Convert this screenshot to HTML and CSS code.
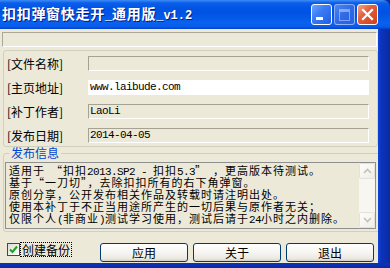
FILE: index.html
```html
<!DOCTYPE html>
<html lang="zh-CN">
<head>
<meta charset="utf-8">
<title>扣扣弹窗快走开_通用版_v1.2</title>
<link rel="stylesheet" href="styles.css">
</head>
<body>
<div class="win">
  <div class="titlebar">
    <span class="title">扣扣弹窗快走开<span class="ta">_</span>通用版<span class="ta">_v1.2</span></span>
    <div class="tbtns">
      <div class="tb tb-min"><span class="minbar"></span></div>
      <div class="tb tb-max"><span class="maxbox"></span></div>
      <div class="tb tb-close">
        <svg width="13" height="13" viewBox="0 0 13 13"><path d="M2 2 L11 11 M11 2 L2 11" stroke="#fff" stroke-width="2.2" stroke-linecap="square"/></svg>
      </div>
    </div>
  </div>
  <div class="frame">
    <div class="client">
      <div class="status"></div>
      <div class="grp1">
        <div class="row"><span class="lbl">[文件名称]</span><span class="fld"></span></div>
        <div class="row"><span class="lbl">[主页地址]</span><span class="fld fld-white">www.laibude.com</span></div>
        <div class="row"><span class="lbl">[补丁作者]</span><span class="fld">LaoLi</span></div>
        <div class="row"><span class="lbl">[发布日期]</span><span class="fld">2014-04-05</span></div>
      </div>
      <fieldset class="grp2">
        <legend class="legend">发布信息</legend>
        <div class="memo">
          <div class="memo-text">
            <div class="ln">适用于<span class="a"> </span>“扣扣<span class="a">2013.SP2 - </span>扣扣<span class="a">5.3</span>”<span class="a"> </span>，更高版本待测试。</div>
            <div class="ln">基于“一刀切”，去除扣扣所有的右下角弹窗。</div>
            <div class="ln">原创分享，公开发布相关作品及转载时请注明出处。</div>
            <div class="ln">使用本补丁于不正当用途所产生的一切后果与原作者无关；</div>
            <div class="ln">仅限个人<span class="a">(</span>非商业<span class="a">)</span>测试学习使用，测试后请于<span class="a">24</span>小时之内删除。</div>
          </div>
          <div class="sbar">
            <div class="sbtn"><svg width="9" height="6" viewBox="0 0 9 6"><path d="M1 5 L4.5 1.5 L8 5" fill="none" stroke="#c4c2b5" stroke-width="1.6"/></svg></div>
            <div class="strack"></div>
            <div class="sbtn"><svg width="9" height="6" viewBox="0 0 9 6"><path d="M1 1 L4.5 4.5 L8 1" fill="none" stroke="#c4c2b5" stroke-width="1.6"/></svg></div>
          </div>
        </div>
      </fieldset>
      <div class="bottom">
        <label class="chk">
          <span class="box"><svg width="9" height="9" viewBox="0 0 9 9"><path d="M1 4.5 L3.5 7 L8 1.5" fill="none" stroke="#21a121" stroke-width="2"/></svg></span>
          <span class="chk-lbl">创建备份</span>
        </label>
        <div class="btns">
          <button class="btn">应用</button>
          <button class="btn">关于</button>
          <button class="btn">退出</button>
        </div>
      </div>
    </div>
    <div class="rframe"></div>
  </div>
  <div class="bframe"></div>
</div>
</body>
</html>
```

FILE: styles.css
```css
html, body {
  margin: 0;
  padding: 0;
  width: 390px;
  height: 268px;
  overflow: hidden;
  background: #0a2b9e;
}
.win {
  width: 390px;
  height: 268px;
  display: flex;
  flex-direction: column;
  font-family: "Noto Sans CJK SC", sans-serif;
  font-size: 12px;
  color: #000;
}
.titlebar {
  height: 29px;
  flex: none;
  display: flex;
  align-items: center;
  justify-content: space-between;
  padding-left: 2px;
  padding-right: 12px;
  border-top-right-radius: 7px;
  background: linear-gradient(to bottom, #3d8cf6 0, #0a5ee8 3px, #0055e6 8px, #0053e0 45%, #0862f0 80%, #0a5ae8 92%, #0043cc 100%);
}
.title {
  color: #fff;
  font-weight: bold;
  font-size: 14px;
  letter-spacing: 0.7px;
  line-height: 16px;
  text-shadow: 1px 1px 0 #0a1883;
  white-space: nowrap;
}
.ta {
  font-family: "Liberation Mono", monospace;
  font-size: 12px;
  letter-spacing: 0;
}
.tbtns {
  display: flex;
  gap: 2px;
}
.tb {
  width: 19px;
  height: 19px;
  border: 1px solid #fff;
  border-radius: 3px;
  display: flex;
  align-items: center;
  justify-content: center;
  position: relative;
}
.tb-min {
  background: linear-gradient(135deg, #6fa4ff 0, #3a7cf6 40%, #1f5de6 100%);
}
.minbar {
  position: absolute;
  left: 4px;
  bottom: 4px;
  width: 7px;
  height: 3px;
  background: #fff;
}
.tb-max {
  border-color: rgba(255, 255, 255, 0.45);
  background: linear-gradient(135deg, #4c85f2 0, #2f6ae8 50%, #2360e4 100%);
}
.maxbox {
  width: 9px;
  height: 8px;
  border: 1px solid rgba(255, 255, 255, 0.4);
  border-top-width: 3px;
}
.tb-close {
  background: linear-gradient(135deg, #f5a48a 0, #e2603c 40%, #cf3f18 100%);
}
.frame {
  flex: 1;
  display: flex;
}
.client {
  width: 378px;
  background: #ece9d8;
  display: flex;
  flex-direction: column;
}
.rframe {
  flex: 1;
  background: linear-gradient(to right, #1045d8 0, #0b34bd 3px, #0a2b9e 100%);
}
.bframe {
  height: 5px;
  flex: none;
  background: linear-gradient(to bottom, #0b34bd, #0a2b9e);
}
.status {
  margin: 3px 0 0 2px;
  width: 373px;
  height: 13px;
  border: 1px solid;
  border-color: #aca899 #fff #fff #aca899;
}
.grp1 {
  margin: 3px 0 0 3px;
  width: 370px;
  border: 1px solid #d0d0bf;
  border-radius: 3px;
  padding: 5px 0 3px 3px;
  display: flex;
  flex-direction: column;
  gap: 9px;
}
.row {
  display: flex;
  align-items: center;
  height: 15px;
}
.lbl {
  width: 81px;
  line-height: 15px;
  white-space: nowrap;
}
.fld {
  width: 278px;
  height: 13px;
  border: 1px solid;
  border-color: #a5a294 #fff #fff #a5a294;
  font-family: "Liberation Mono", monospace;
  font-size: 11px;
  letter-spacing: -0.6px;
  line-height: 13px;
  padding-left: 1px;
  white-space: nowrap;
  overflow: hidden;
}
.fld-white {
  background: #fff;
  border-color: #fff;
}
.grp2 {
  margin: 0 0 0 3px;
  width: 371px;
  border: 1px solid #d0d0bf;
  border-radius: 3px;
  padding: 0 5px 2px 1px;
  min-width: 0;
}
.legend {
  color: #0046d5;
  padding: 0 2px;
  margin-left: 4px;
  line-height: 12px;
  font-size: 12px;
}
.memo {
  margin-top: 3px;
  height: 65px;
  border: 1px solid #8e8f8f;
  display: flex;
  background: #ece9d8;
}
.memo-text {
  flex: 1;
  padding: 1px 0 0 3px;
  font-size: 11px;
  letter-spacing: 1px;
  white-space: nowrap;
  overflow: hidden;
}
.ln {
  height: 12px;
  line-height: 12px;
}
.a {
  font-family: "Liberation Mono", monospace;
  font-size: 11px;
  letter-spacing: -0.6px;
}
.sbar {
  width: 16px;
  display: flex;
  flex-direction: column;
  background: #f7f6f1;
}
.sbtn {
  height: 14px;
  border: 1px solid #e4e2d8;
  border-radius: 2px;
  background: linear-gradient(135deg, #fdfdfc, #eeede6);
  display: flex;
  align-items: center;
  justify-content: center;
}
.strack {
  flex: 1;
}
.bottom {
  display: flex;
  align-items: flex-start;
  padding: 11px 0 0 7px;
}
.chk {
  display: flex;
  align-items: center;
  gap: 1px;
  width: 93px;
}
.box {
  width: 11px;
  height: 11px;
  border: 1px solid #1c5180;
  background: linear-gradient(135deg, #dcdcd7, #fff);
  display: flex;
  align-items: center;
  justify-content: center;
}
.chk-lbl {
  outline: 1px dotted #000;
  line-height: 13px;
  padding: 0 1px;
}
.btns {
  display: flex;
  gap: 5px;
}
.btn {
  width: 88px;
  height: 19px;
  margin: 0;
  padding: 0;
  border: 1px solid #003c74;
  border-radius: 3px;
  background: linear-gradient(to bottom, #fff 0, #f6f5f1 50%, #ebe9e1 85%, #d6d0c5 100%);
  font-family: "Noto Sans CJK SC", sans-serif;
  font-size: 12px;
  line-height: 15px;
  color: #000;
}
```
